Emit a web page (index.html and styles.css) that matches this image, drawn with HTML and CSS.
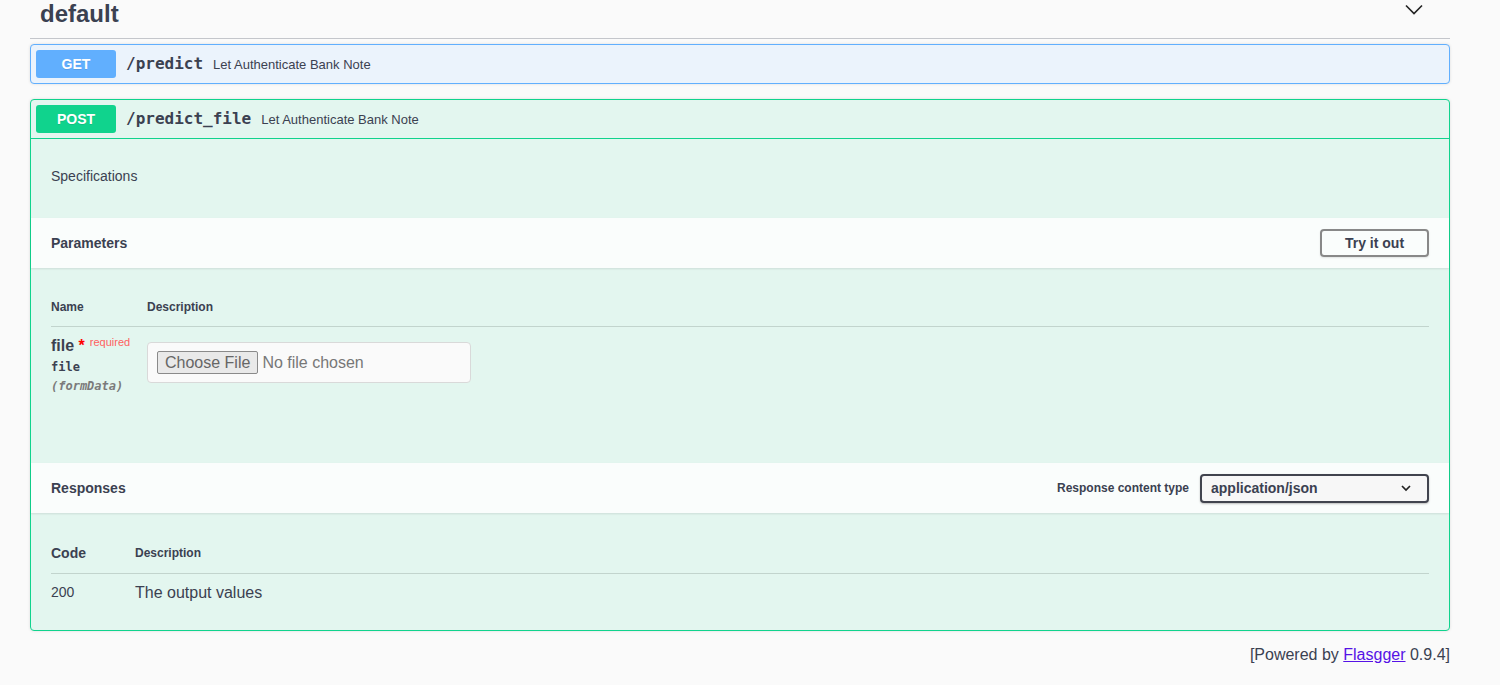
FILE: index.html
```html
<!DOCTYPE html>
<html lang="en">
<head>
<meta charset="utf-8">
<title>Flasgger</title>
<link rel="stylesheet" href="styles.css">
</head>
<body>
<div class="wrap">
  <h4 class="tag">
    <span class="tag-name">default</span>
    <svg class="tag-arrow" width="20" height="20" viewBox="0 0 20 20"><polyline points="2,4.5 10,12.5 18,4.5" fill="none" stroke="#222" stroke-width="1.6"/></svg>
  </h4>

  <div class="opblock get">
    <div class="summary">
      <span class="method">GET</span>
      <span class="path">/predict</span>
      <span class="desc">Let Authenticate Bank Note</span>
    </div>
  </div>

  <div class="opblock post">
    <div class="summary">
      <span class="method">POST</span>
      <span class="path">/predict_file</span>
      <span class="desc">Let Authenticate Bank Note</span>
    </div>
    <div class="op-body">
      <div class="description"><p>Specifications</p></div>

      <div class="section-header">
        <h4 class="section-title">Parameters</h4>
        <button class="try-out" type="button">Try it out</button>
      </div>
      <div class="table-container">
        <table class="params">
          <thead>
            <tr><th class="col-name">Name</th><th>Description</th></tr>
          </thead>
          <tbody>
            <tr>
              <td class="col-name">
                <div class="pname">file<span class="star">&nbsp;*</span><span class="req">required</span></div>
                <div class="ptype">file</div>
                <div class="pin">(formData)</div>
              </td>
              <td class="pdesc">
                <div class="file-input"><span class="file-btn">Choose File</span><span class="file-none">No file chosen</span></div>
              </td>
            </tr>
          </tbody>
        </table>
      </div>

      <div class="section-header">
        <h4 class="section-title">Responses</h4>
        <div class="content-type">
          <span class="ct-label">Response content type</span>
          <div class="select"><span>application/json</span>
            <svg class="select-arrow" width="12" height="12" viewBox="0 0 12 12"><polyline points="2,4 6,8 10,4" fill="none" stroke="#222" stroke-width="1.7"/></svg>
          </div>
        </div>
      </div>
      <div class="responses-inner">
        <table class="responses">
          <thead>
            <tr><th class="col-code">Code</th><th class="th-small">Description</th></tr>
          </thead>
          <tbody>
            <tr><td class="col-code code">200</td><td class="rdesc">The output values</td></tr>
          </tbody>
        </table>
      </div>
    </div>
  </div>

  <div class="footer">[Powered by <a href="#">Flasgger</a> 0.9.4]</div>
</div>
</body>
</html>
```

FILE: styles.css
```css
html, body {
  margin: 0;
  padding: 0;
  background: #fafafa;
  overflow: hidden;
}

body {
  font-family: "Liberation Sans", Arial, sans-serif;
  color: #3b4151;
}

.wrap {
  width: 1420px;
  margin-left: 30px;
}

.tag {
  display: flex;
  align-items: center;
  margin: -10px 0 5px;
  padding: 10px 26px 10px 10px;
  font-size: 24px;
  line-height: 28px;
  font-weight: bold;
  border-bottom: 1px solid #c4c6cb;
}

.tag-name {
  flex: 1;
}

.tag-arrow {
  display: block;
  margin-bottom: 6px;
}

.opblock {
  border: 1px solid #000;
  border-radius: 4px;
  margin-bottom: 15px;
  box-shadow: 0 0 3px rgba(0, 0, 0, .12);
}

.opblock.get {
  background: #ebf3fc;
  border-color: #61affe;
}

.opblock.post {
  background: #e3f6ef;
  border-color: #10d38d;
}

.summary {
  display: flex;
  align-items: center;
  padding: 5px;
}

.post .summary {
  border-bottom: 1px solid #10d38d;
}

.method {
  width: 80px;
  padding: 6px 0;
  text-align: center;
  font-size: 14px;
  line-height: 16px;
  font-weight: bold;
  color: #fff;
  border-radius: 3px;
  text-shadow: 0 1px 0 rgba(0, 0, 0, .1);
}

.get .method {
  background: #61affe;
}

.post .method {
  background: #10d38d;
}

.path {
  padding: 0 10px;
  font-family: "DejaVu Sans Mono", monospace;
  font-weight: bold;
  font-size: 16px;
  line-height: 18px;
  color: #3b4151;
}

.desc {
  font-size: 13px;
  color: #3b4151;
}

.description {
  padding: 15px 20px;
}

.description p {
  margin: 12px 0 17px;
  font-size: 14px;
  line-height: 20px;
}

.section-header {
  display: flex;
  align-items: center;
  justify-content: space-between;
  box-sizing: border-box;
  min-height: 50px;
  padding: 8px 20px;
  background: rgba(255, 255, 255, .8);
  box-shadow: 0 1px 2px rgba(0, 0, 0, .1);
}

.section-title {
  margin: 0;
  font-size: 14px;
  font-weight: bold;
}

.try-out {
  box-sizing: border-box;
  width: 109px;
  height: 28px;
  padding: 0;
  font-family: "Liberation Sans", Arial, sans-serif;
  font-size: 14px;
  font-weight: bold;
  color: #3b4151;
  background: transparent;
  border: 2px solid #888;
  border-radius: 4px;
  box-shadow: 0 1px 2px rgba(0, 0, 0, .1);
}

.table-container {
  padding: 20px 20px 60px;
}

table {
  width: 100%;
  border-collapse: collapse;
}

th {
  text-align: left;
  padding: 12px 0;
  font-size: 12px;
  line-height: 14px;
  font-weight: bold;
  border-bottom: 1px solid #c2d4cd;
}

td {
  vertical-align: top;
  padding: 10px 0;
}

.params .col-name {
  width: 96px;
}

.pname {
  font-size: 16px;
  line-height: 18px;
  height: 18px;
  font-weight: bold;
}

.star {
  color: #f00;
}

.req {
  font-size: 11px;
  line-height: 0;
  font-weight: normal;
  padding: 0 5px;
  color: #ff5f5f;
  vertical-align: 5px;
}

.ptype {
  padding: 5px 0;
  font-family: "DejaVu Sans Mono", monospace;
  font-size: 12px;
  line-height: 14px;
  font-weight: bold;
}

.pin {
  font-family: "DejaVu Sans Mono", monospace;
  font-size: 12px;
  line-height: 14px;
  font-style: italic;
  font-weight: bold;
  color: #7b7b7b;
}

.pdesc {
  padding-top: 15px;
}

.file-input {
  display: flex;
  align-items: center;
  box-sizing: border-box;
  width: 324px;
  height: 41px;
  padding: 0 9px;
  background: #fafafa;
  border: 1px solid #d9d9d9;
  border-radius: 4px;
  font-size: 16px;
}

.file-btn {
  box-sizing: border-box;
  height: 23px;
  padding: 0 7px;
  line-height: 21px;
  color: #666;
  background: #e9e9e9;
  border: 1px solid #8a8a8a;
  border-radius: 2px;
}

.file-none {
  margin-left: 4px;
  color: #777;
}

.content-type {
  display: flex;
  align-items: center;
}

.ct-label {
  margin-right: 11px;
  font-size: 12px;
  font-weight: bold;
}

.select {
  display: flex;
  align-items: center;
  justify-content: space-between;
  box-sizing: border-box;
  width: 229px;
  height: 29px;
  padding: 0 15px 0 9px;
  background: #f7f7f7;
  border: 2px solid #41444e;
  border-radius: 4px;
  box-shadow: 0 1px 2px rgba(0, 0, 0, .25);
  font-size: 14px;
  font-weight: bold;
}

.select-arrow {
  display: block;
}

.responses-inner {
  padding: 20px 20px 18px;
}

.responses .col-code {
  width: 84px;
}

.responses th.col-code {
  font-size: 14px;
  line-height: 16px;
}

.code {
  font-size: 14px;
  line-height: 16px;
}

.rdesc {
  font-size: 16px;
  line-height: 18px;
}

.footer {
  margin-top: 14px;
  text-align: right;
  font-size: 16px;
  line-height: 18px;
}

.footer a {
  color: #5512e6;
}
```
